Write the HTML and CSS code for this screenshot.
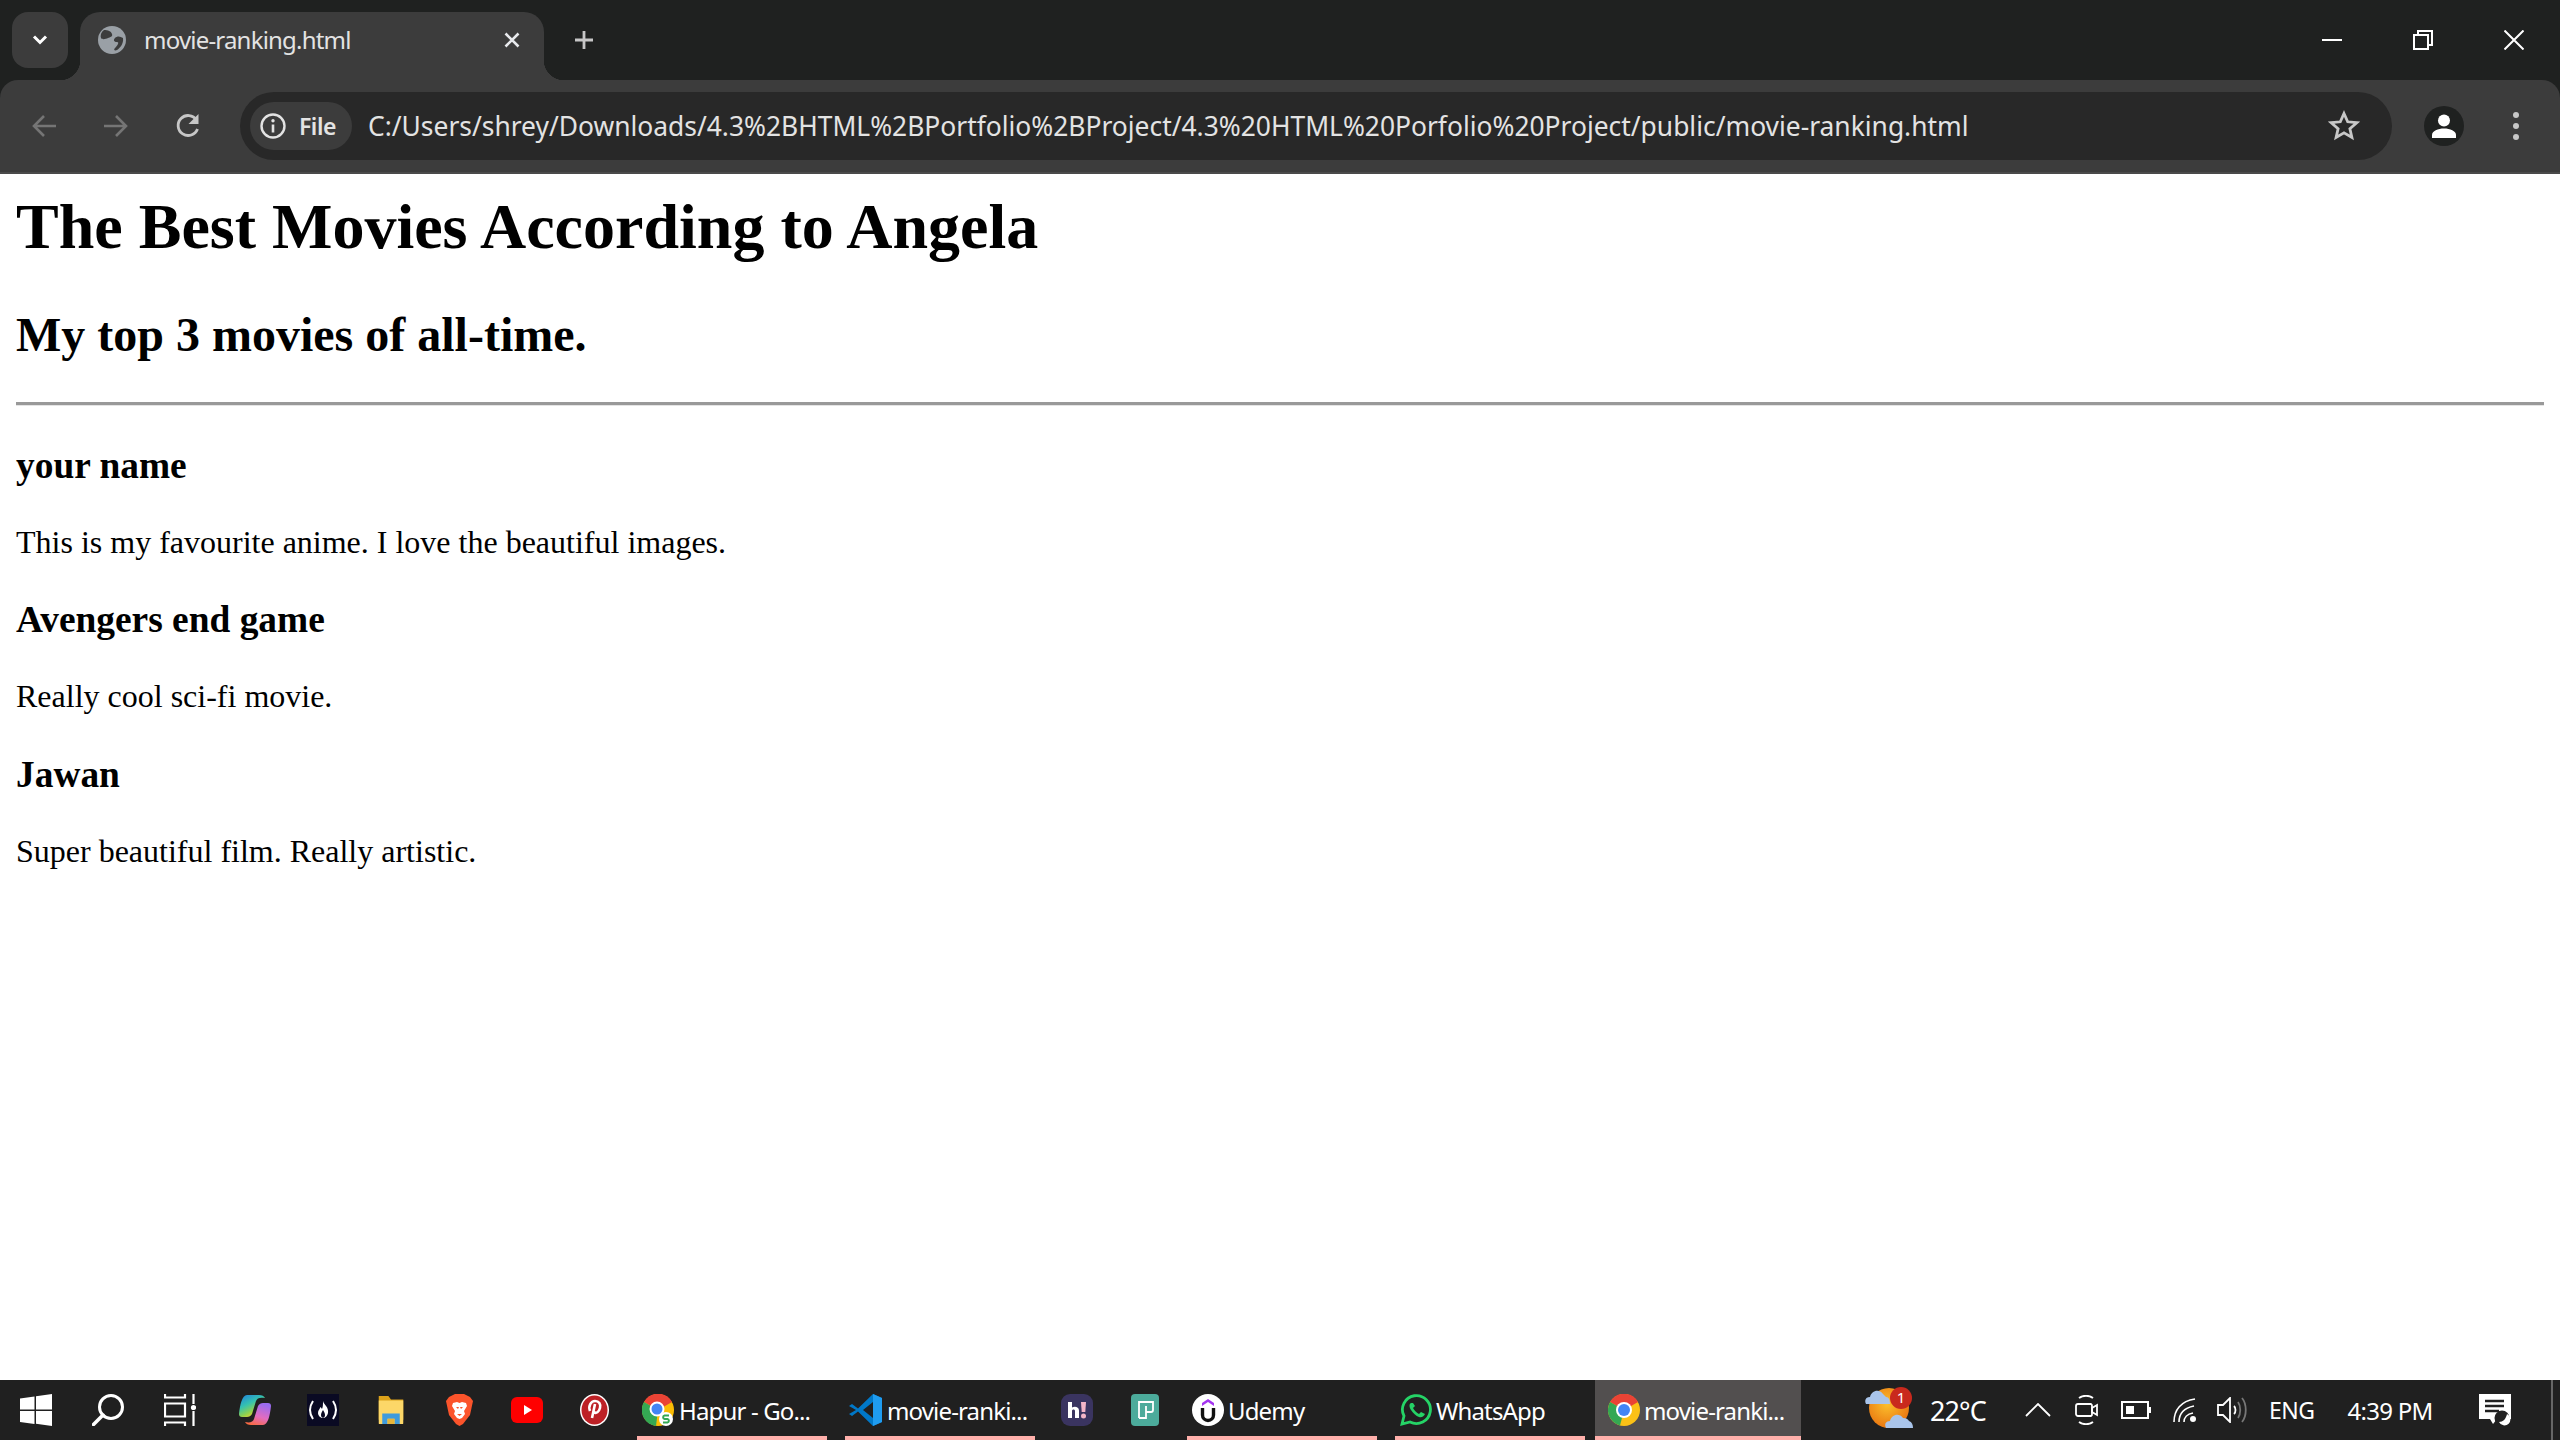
FILE: index.html
```html
<!DOCTYPE html>
<html lang="en">
<head>
<meta charset="utf-8">
<title>movie-ranking.html</title>
<link rel="stylesheet" href="styles.css">
</head>
<body>
<div class="window">
  <header class="tabstrip">
    <button class="tabsearch"><svg width="16" height="10" viewBox="0 0 16 10"><path d="M2 1.500l6 6 6-6" fill="none" stroke="#fff" stroke-width="3"/></svg></button>
    <div class="tab">
      <svg class="globe" width="28" height="28" viewBox="0 0 28 28"><circle cx="14" cy="14" r="14" fill="#9aa0a6"/><path d="M6 4c4 0 7 1 8 4s-2 3-4 4-6 2-7 0 0-6 3-8zM25 12c-3-2-6-2-8 0s-1 4 2 4 0 4-2 6 0 3 2 2 7-6 6-12z" fill="#3c3c3c"/></svg>
      <span class="tabtitle">movie-ranking.html</span>
      <svg class="tabclose" width="16" height="16" viewBox="0 0 16 16"><path d="M1.500 1.500l13 13M14.500 1.500l-13 13" stroke="#e8eaed" stroke-width="2.600"/></svg>
    </div>
    <svg class="newtab" width="20" height="20" viewBox="0 0 20 20"><path d="M10 1v18M1 10h18" stroke="#c7c7c7" stroke-width="2.800"/></svg>
    <div class="winctrls">
      <svg width="20" height="20" viewBox="0 0 20 20"><path d="M0 10h20" stroke="#fff" stroke-width="2"/></svg>
      <svg width="20" height="20" viewBox="0 0 20 20"><path d="M1 5h14v14H1zM5 5V1h14v14h-4" fill="none" stroke="#fff" stroke-width="2"/></svg>
      <svg width="20" height="20" viewBox="0 0 20 20"><path d="M.5.500l19 19M19.500.500l-19 19" stroke="#fff" stroke-width="2"/></svg>
    </div>
  </header>

  <nav class="toolbar">
    <svg class="navbtn" width="26" height="24" viewBox="0 0 26 24"><path d="M25 12H3M13 2L3 12l10 10" fill="none" stroke="#757575" stroke-width="2.600"/></svg>
    <svg class="navbtn fwd" width="26" height="24" viewBox="0 0 26 24"><path d="M1 12h22M13 2l10 10-10 10" fill="none" stroke="#757575" stroke-width="2.600"/></svg>
    <svg class="navbtn reload" width="26" height="26" viewBox="0 0 26 26"><path d="M22.500 16a10 10 0 1 1-1-9" fill="none" stroke="#c7c7c7" stroke-width="2.800"/><path d="M23.500 1v10h-10z" fill="#c7c7c7"/></svg>
    <div class="omnibox">
      <div class="chip">
        <svg width="26" height="26" viewBox="0 0 26 26"><circle cx="13" cy="13" r="11.500" fill="none" stroke="#e3e3e3" stroke-width="2.400"/><path d="M13 11.500v8" stroke="#e3e3e3" stroke-width="2.600"/><circle cx="13" cy="7.800" r="1.700" fill="#e3e3e3"/></svg>
        <span class="chiplabel">File</span>
      </div>
      <span class="url">C:/Users/shrey/Downloads/4.3%2BHTML%2BPortfolio%2BProject/4.3%20HTML%20Porfolio%20Project/public/movie-ranking.html</span>
      <svg class="star" width="32" height="32" viewBox="0 0 32 32"><path d="M16 3.500l3.700 8.300 9 .900-6.800 6 2 8.800-7.900-4.600-7.900 4.600 2-8.800-6.800-6 9-.900z" fill="none" stroke="#c7c7c7" stroke-width="2.800"/></svg>
    </div>
    <div class="avatar"><svg width="24" height="24" viewBox="0 0 24 24"><circle cx="12" cy="6.500" r="6" fill="#fff"/><path d="M0 24v-3c0-4 6-6.500 12-6.500S24 17 24 21v3z" fill="#fff"/></svg></div>
    <svg class="kebab" width="6" height="28" viewBox="0 0 6 28"><circle cx="3" cy="3" r="3" fill="#c7c7c7"/><circle cx="3" cy="14" r="3" fill="#c7c7c7"/><circle cx="3" cy="25" r="3" fill="#c7c7c7"/></svg>
  </nav>

  <main class="page">
    <h1>The Best Movies According to Angela</h1>
    <h2>My top 3 movies of all-time.</h2>
    <hr>
    <h3>your name</h3>
    <p>This is my favourite anime. I love the beautiful images.</p>
    <h3>Avengers end game</h3>
    <p>Really cool sci-fi movie.</p>
    <h3>Jawan</h3>
    <p>Super beautiful film. Really artistic.</p>
  </main>

  <footer class="taskbar">
    <div class="slot wide"><svg width="32" height="32" viewBox="0 0 32 32"><path d="M0 4.500l14.500-2v13H0zM16 2.200L32 0v15.500H16zM0 17h14.500v13L0 28zM16 17h16v15l-16-2.200z" fill="#fff"/></svg></div>
    <div class="slot wide"><svg width="32" height="32" viewBox="0 0 32 32"><circle cx="19" cy="13" r="11.500" fill="none" stroke="#fff" stroke-width="3"/><path d="M11 21L1.500 30.500" stroke="#fff" stroke-width="3.500" stroke-linecap="round"/></svg></div>
    <div class="slot wide"><svg width="32" height="32" viewBox="0 0 32 32"><path d="M1 0v3.500h20V0M1 32v-3.500h20V32M1 9.500h20v13H1zM29.500 0v10M29.500 17v15" fill="none" stroke="#fff" stroke-width="2.200"/><circle cx="29.500" cy="13.500" r="2.600" fill="#fff"/></svg></div>
    <div class="slot first"><svg width="32" height="32" viewBox="0 0 32 32"><defs><linearGradient id="cpa" x1="0" y1="0" x2=".6" y2="1"><stop offset="0" stop-color="#1f7fe0"/><stop offset=".45" stop-color="#35c2b0"/><stop offset=".75" stop-color="#8fd14f"/><stop offset="1" stop-color="#f5d02e"/></linearGradient><linearGradient id="cpb" x1=".6" y1="0" x2=".2" y2="1"><stop offset="0" stop-color="#9a6cf0"/><stop offset=".55" stop-color="#e26cc0"/><stop offset="1" stop-color="#fa6a3a"/></linearGradient></defs><path d="M8 1h12c3 0 5 1 6 3-5-1-8 0-9 3l-4 13c-1 2-3 3-5 3H3c-2 0-3-1-3-3C1 11 3 1 8 1z" fill="url(#cpa)"/><path d="M24 31H12c-3 0-5-1-6-3 5 1 8 0 9-3l4-13c1-2 3-3 5-3h5c2 0 3 1 3 3-1 9-3 19-8 19z" fill="url(#cpb)"/></svg></div>
    <div class="slot"><svg width="32" height="32" viewBox="0 0 32 32"><rect width="32" height="32" fill="#0a0a23"/><path d="M6 7C2 13 2 19 6 25M26 7c4 6 4 12 0 18" fill="none" stroke="#fff" stroke-width="2"/><path d="M16 7c1 4 6 6 5 12-.5 3-3 5-5 5s-5-2-5-5c0-3 2-4 2.500-6 1 1 1.500 2 1.500 2 1-2 1-5 1-8z" fill="#fff"/><path d="M16 16c1 2 2 3 2 5s-1 2-2 3c-1-1-2-1-2-3s1-3 2-5z" fill="#0a0a23"/></svg></div>
    <div class="slot"><svg width="28" height="28" viewBox="0 0 32 32"><path d="M2 0h11l3 4h14v23H2z" fill="#dca21a"/><path d="M2 5h28v26a1 1 0 0 1-1 1H3a1 1 0 0 1-1-1z" fill="#fcd768"/><path d="M6 32V20h20v12h-6v-6h-8v6z" fill="#3f9bdc"/><rect x="12" y="26" width="8" height="6" fill="#e7b53a"/></svg></div>
    <div class="slot"><svg width="27" height="32" viewBox="0 0 27 32"><path d="M3 3l6-3h9l6 3 3 4-3 14-7 9-3.500 2-3.500-2-7-9L0 7z" fill="#fb542b"/><path d="M7 9l4-1 2.500 1L16 8l4 1 1 3-3 5 1 3-3 4-2.500 1L11 24l-3-4 1-3-3-5z" fill="#fff"/><path d="M10 13h3l-1 2zM14 13h3l-2 2zM11 20h5l-2.500 2z" fill="#fb542b"/></svg></div>
    <div class="slot"><svg width="32" height="26" viewBox="0 0 32 26"><rect width="32" height="26" rx="6" fill="#f00"/><path d="M13 8l8 5-8 5z" fill="#fff"/></svg></div>
    <div class="slot pin"><svg width="29" height="32" viewBox="0 0 29 32"><ellipse cx="14.500" cy="16" rx="14.500" ry="16" fill="#fff"/><ellipse cx="14.500" cy="16" rx="13" ry="14.500" fill="#bd2126"/><path d="M10 17c-2-5 1-10 5-10s6 3 5 7-4 6-6 4m1-8l-3 14" fill="none" stroke="#fff" stroke-width="2.600"/></svg></div>

    <div class="app hapur">
      <svg width="32" height="32" viewBox="0 0 32 32"><circle cx="16" cy="16" r="16" fill="#fbbc04"/><path d="M16 16L2 8A16 16 0 0 1 30 8z" fill="#ea4335"/><path d="M16 16L2 8a16 16 0 0 0 12 24z" fill="#34a853"/><circle cx="15" cy="15" r="6.500" fill="#4285f4" stroke="#fff" stroke-width="2"/><circle cx="24" cy="25" r="7" fill="#fff"/><path d="M27 21.500h-4.500a1.800 1.800 0 0 0 0 3.500h3a1.800 1.800 0 0 1 0 3.500H21" fill="none" stroke="#34a853" stroke-width="2"/></svg>
      <span class="applabel">Hapur - Go...</span>
    </div>
    <div class="app vscode">
      <svg width="33" height="32" viewBox="0 0 33 32"><path d="M24 0l9 4v24l-9 4L9 17.500 3 22l-3-2 7-4-7-4 3-2 6 4.500z" fill="#0078c8"/><path d="M24 0l9 4v24l-9 4z" fill="#1f9cf0"/><path d="M24 8v16l-10-8z" fill="#202020"/></svg>
      <span class="applabel">movie-ranki...</span>
    </div>
    <div class="slot hi"><svg width="32" height="32" viewBox="0 0 32 32"><rect width="32" height="32" rx="9" fill="#3a3460"/><path d="M7 8h4v5.500c2.500-1.500 7-1 7 3V24h-4v-7c0-2-3-2-3 0v7H7z" fill="#fff"/><path d="M20 8h5l-.7 10h-3.600z" fill="#f4b5c8"/><circle cx="22.500" cy="22" r="2.500" fill="#f4b5c8"/></svg></div>
    <div class="slot"><svg width="28" height="32" viewBox="0 0 28 32"><rect width="28" height="32" rx="4" fill="#4cab9b"/><path d="M8 24V8h14v8c0 1.500-1 2-2 2h-5v-6M15 18v6H8" fill="none" stroke="#fff" stroke-width="1.800"/></svg></div>
    <div class="app udemy">
      <svg width="32" height="32" viewBox="0 0 32 32"><circle cx="16" cy="16" r="16" fill="#fff"/><path d="M16 5l6 4v3l-6-4-6 4V9z" fill="#a435f0"/><path d="M10.500 14v7a5.500 5.500 0 0 0 11 0v-7" fill="none" stroke="#111" stroke-width="3.400"/></svg>
      <span class="applabel">Udemy</span>
    </div>
    <div class="app whatsapp">
      <svg width="32" height="32" viewBox="0 0 32 32"><path d="M2 30l2-8A14 14 0 1 1 10 28z" fill="none" stroke="#25d366" stroke-width="2.800"/><path d="M11 9c-2 1-2 4 0 7s5 6 8 7 5-1 6-3l-4-2-2 2c-2-1-5-4-6-6l2-2-2-3z" fill="#25d366"/></svg>
      <span class="applabel">WhatsApp</span>
    </div>
    <div class="app chrome">
      <svg width="32" height="32" viewBox="0 0 32 32"><circle cx="16" cy="16" r="16" fill="#fbc116"/><path d="M16 16L2.100 8A16 16 0 0 1 30 8z" fill="#ea4335"/><path d="M16 16L2.100 8A16 16 0 0 0 12 31.500z" fill="#34a853"/><circle cx="16" cy="16" r="8" fill="#fff"/><circle cx="16" cy="16" r="6" fill="#4285f4"/></svg>
      <span class="applabel">movie-ranki...</span>
    </div>

    <div class="tray">
      <svg class="weather" width="48" height="42" viewBox="0 0 48 42"><defs><radialGradient id="sun" cx=".45" cy=".4" r=".65"><stop offset="0" stop-color="#fbc02d"/><stop offset="1" stop-color="#e9720f"/></radialGradient></defs><circle cx="24" cy="21" r="20" fill="url(#sun)"/><circle cx="36" cy="11" r="11" fill="#c9291d"/><path d="M1 17c-2-4 0-7 4-7 1-6 9-9 13-3 1 1 2 2 3 3 3 0 4 3 4 7z" fill="#a9c4ea"/><path d="M21 41c-2-4 0-7 4-7 1-6 9-9 13-3 3 0 5 1 6 3 3 1 4 4 4 7z" fill="#a9c4ea"/><text class="badge" x="36" y="16" text-anchor="middle">1</text></svg>
      <span class="temp">22°C</span>
      <svg class="chev" width="26" height="14" viewBox="0 0 26 14"><path d="M1 13L13 1l12 12" fill="none" stroke="#fff" stroke-width="1.800"/></svg>
      <svg class="meet" width="23" height="30" viewBox="0 0 23 30"><path d="M4 3c4-3 10-3 14 0M4 27c4 3 10 3 14 0" fill="none" stroke="#fff" stroke-width="1.800"/><path d="M3 9h13a2 2 0 0 1 1 2v8a2 2 0 0 1-1 2H3a2 2 0 0 1-2-2v-8a2 2 0 0 1 2-2z" fill="none" stroke="#fff" stroke-width="1.800"/><path d="M17 13l5-3v10l-5-3z" fill="none" stroke="#fff" stroke-width="1.800"/></svg>
      <svg class="battery" width="30" height="18" viewBox="0 0 30 18"><rect x="1" y="1" width="26" height="16" fill="none" stroke="#fff" stroke-width="2"/><rect x="5" y="5" width="8" height="8" fill="#fff"/><rect x="28" y="6" width="2" height="6" fill="#fff"/></svg>
      <svg class="wifi" width="24" height="24" viewBox="0 0 24 24"><path d="M1 24C1 12 8 3 22 1M6 24c0-8 5-14 15-16M11 24c0-4 3-8 9-9" fill="none" stroke="#fff" stroke-width="1.600"/><circle cx="20" cy="21" r="3" fill="#fff"/></svg>
      <svg class="speaker" width="30" height="26" viewBox="0 0 30 26"><path d="M1 8h5l7-7v24l-7-7H1z" fill="none" stroke="#fff" stroke-width="1.800"/><path d="M17 9c2 2 2 6 0 8" fill="none" stroke="#fff" stroke-width="1.800"/><path d="M21 5c3 4 3 12 0 16M25 1c5 6 5 18 0 24" fill="none" stroke="#777" stroke-width="1.800"/></svg>
      <span class="lang">ENG</span>
      <span class="clock">4:39 PM</span>
      <svg class="notify" width="32" height="32" viewBox="0 0 32 32"><path d="M0 0h32v25H18l-4 5-3-5H0z" fill="#fff"/><path d="M6 7h19M6 12h19M6 17h14" stroke="#202020" stroke-width="2.400"/><circle cx="23" cy="24" r="7.500" fill="#202020"/><path d="M28 20a6 6 0 1 1-8 8c4 0 7-3 8-8z" fill="#fff"/></svg>
      <div class="showdesk"></div>
    </div>
  </footer>
</div>
</body>
</html>
```

FILE: styles.css
```css
* { box-sizing: border-box; }
html, body { margin: 0; height: 100%; }
body { font-family: "Liberation Serif", "Times New Roman", serif; background: #fff; }
svg { display: block; flex: none; }
.window { display: flex; flex-direction: column; height: 1440px; overflow: hidden; background: #1f2120; }

/* tab strip */
.tabstrip { height: 80px; flex: none; background: #1f2120; display: flex; align-items: flex-start; padding: 12px 36px 0 12px; font-family: "Noto Sans", sans-serif; }
.tabsearch { width: 56px; height: 56px; padding: 0; border: 0; border-radius: 16px; background: #3c3c3c; display: flex; align-items: center; justify-content: center; }
.tab { position: relative; width: 464px; height: 68px; margin-left: 12px; background: #3c3c3c; border-radius: 20px 20px 0 0; display: flex; align-items: flex-start; padding: 14px 24px 0 18px; }
.tab::before, .tab::after { content: ""; position: absolute; bottom: 0; width: 20px; height: 20px; }
.tab::before { left: -20px; background: radial-gradient(circle at 0 0, transparent 20px, #3c3c3c 20.500px); }
.tab::after { right: -20px; background: radial-gradient(circle at 100% 0, transparent 20px, #3c3c3c 20.500px); }
.globe { margin-right: 18px; }
.tabtitle { flex: 1; color: #e3e3e3; font-size: 24px; line-height: 28px; letter-spacing: -.8px; }
.tabclose { margin-top: 6px; }
.newtab { margin: 18px 0 0 30px; }
.winctrls { margin-left: auto; display: flex; gap: 71px; padding-top: 18px; }

/* toolbar */
.toolbar { height: 94px; flex: none; background: #3c3c3c; border-bottom: 2px solid #4a4a4a; border-radius: 18px 18px 0 0; display: flex; align-items: center; padding: 0 41px 0 31px; }
.navbtn { margin-right: 46px; }
.navbtn.reload { margin-right: 40px; }
.omnibox { width: 2152px; height: 68px; border-radius: 34px; background: #282828; display: flex; align-items: center; padding: 0 32px 0 10px; margin-left: -1px; }
.chip { width: 102px; height: 48px; border-radius: 24px; background: #3c3c3c; display: flex; align-items: center; padding-left: 10px; gap: 13px; }
.chiplabel { color: #e3e3e3; font: 600 23px "Noto Sans", sans-serif; letter-spacing: -.5px; }
.url { margin-left: 16px; color: #e3e3e3; font: 26.400px "Noto Sans", sans-serif; white-space: nowrap; flex: 1; }
.avatar { width: 40px; height: 40px; border-radius: 50%; background: #1f2120; display: flex; align-items: center; justify-content: center; margin-left: 32px; overflow: hidden; }
.kebab { margin-left: 49px; }

/* page */
.page { flex: 1; padding: 0 16px; color: #000; overflow: hidden; background: #fff; }
h1 { font-size: 64px; margin: 16px 0 0; line-height: 74px; }
h2 { font-size: 48px; margin: 43px 0 0; line-height: 55px; }
hr { margin: 40px 0 0; height: 4px; border: 0; border-top: 3px solid #999; border-bottom: 1px solid #e4e4e4; }
h3 { font-size: 37.400px; margin: 37.600px 0 0; line-height: 43px; }
p { font-size: 32px; margin: 37px 0 0; line-height: 37.500px; }
p + h3 { margin-top: 37.100px; }

/* taskbar */
.taskbar { height: 60px; flex: none; background: #202020; display: flex; align-items: stretch; color: #fff; font-family: "Noto Sans", sans-serif; }
.slot { width: 68px; display: flex; align-items: center; justify-content: center; }
.slot.wide { width: 72px; }
.slot.first { margin-left: 5px; }
.slot.pin { padding-right: 2px; }
.app { width: 190px; margin-right: 18px; border-bottom: 4px solid #ffb0ab; display: flex; align-items: center; padding: 4px 0 0 5px; gap: 5px; }
.applabel { font-size: 24px; letter-spacing: -.85px; white-space: nowrap; }
.hapur { margin-left: 8px; }
.vscode { margin-right: 8px; padding-left: 4px; }
.udemy { margin-left: 8px; gap: 4px; }
.whatsapp { margin-right: 10px; gap: 4px; }
.chrome { width: 206px; margin-right: 0; background: #524f4f; padding-left: 13px; gap: 4px; }
.tray { flex: 1; display: flex; align-items: center; }
.weather { margin-left: 64px; margin-top: -4px; }
.badge { font: 15px "Noto Sans", sans-serif; fill: #fff; }
.temp { margin-left: 17px; font-size: 27px; letter-spacing: -.9px; }
.chev { margin-left: 39px; }
.meet { margin-left: 24px; }
.battery { margin-left: 23px; }
.wifi { margin-left: 22px; }
.speaker { margin-left: 20px; }
.lang { margin-left: 22px; font-size: 23px; letter-spacing: -.5px; }
.clock { margin-left: 33px; font-size: 24px; letter-spacing: -.7px; }
.notify { margin-left: 46px; }
.showdesk { margin-left: auto; margin-right: 7px; width: 2px; height: 60px; background: #666; }
```
